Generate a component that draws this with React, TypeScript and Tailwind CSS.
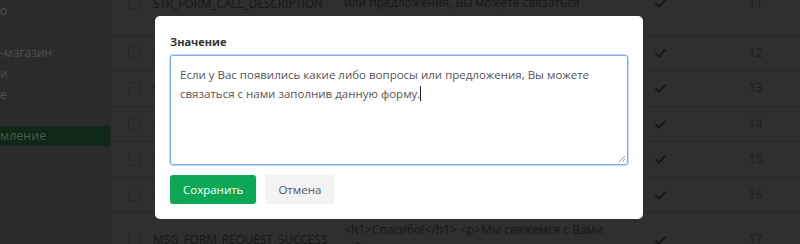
import React from 'react';

const rows = [
  { id: 11, key: 'STR_FORM_CALL_DESCRIPTION', value: ['Если у Вас появились какие либо вопросы', 'или предложения, Вы можете связаться', 'с нами заполнив данную форму.'] },
  { id: 12, key: 'STR_FORM_CALL_TITLE', value: ['Обратная связь'] },
  { id: 13, key: 'STR_FORM_NAME', value: ['Ваше имя'] },
  { id: 14, key: 'STR_FORM_PHONE', value: ['Телефон'] },
  { id: 15, key: 'STR_FORM_EMAIL', value: ['E-mail'] },
  { id: 16, key: 'STR_FORM_SEND', value: ['Отправить'] },
  { id: 17, key: 'MSG_FORM_REQUEST_SUCCESS', value: ['<h1>Спасибо!</h1> <p>Мы свяжемся с Вами', 'в ближайшее время.</p>'] },
];

const Check = () => (
  <svg width="11" height="9" viewBox="0 0 11 9" fill="none">
    <path d="M1 4.8 L4 7.6 L10 1.2" stroke="#161616" strokeWidth="2" strokeLinecap="round" strokeLinejoin="round" />
  </svg>
);

const App = () => {
  return (
    <div
      className="relative w-[800px] h-[244px] overflow-hidden bg-[#2f2f2f]"
      style={{ fontFamily: '"Open Sans", "Noto Sans", sans-serif' }}
    >
      <div className="flex h-full">
        {/* sidebar, dimmed */}
        <div className="w-[111px] shrink-0 bg-[#2b2b2b] border-r border-[#272727] text-[12px] text-[#4e4e4e]">
          <div className="leading-[21px] h-[21px]">о</div>
          <div className="h-[21px]" />
          <div className="leading-[21px] h-[21px]">-магазин</div>
          <div className="leading-[21px] h-[21px]">и</div>
          <div className="leading-[21px] h-[21px]">е</div>
          <div className="h-[21px]" />
          <div className="leading-[20px] h-[20px] bg-[#0f2716] text-[#415c49] text-[12.5px]">мление</div>
        </div>

        {/* table, dimmed */}
        <div className="flex-1 -mt-[33px] text-[11.75px] text-[#171717]">
          {rows.map((r, idx) => (
            <div
              key={r.id}
              className={`flex items-center border-b border-[#282828] leading-[18.5px] ${idx === 0 ? 'pt-[8px] pb-[4px]' : 'py-[8px]'}`}
            >
              <div className="w-[42px] flex justify-center pl-[5px]">
                <div className="w-[13px] h-[13px] rounded-[3px] border border-[#262626]" />
              </div>
              <div className="w-[191px]">{r.key}</div>
              <div className="w-[303px] text-[12px]">
                {r.value.map((v, i) => (
                  <div key={i}>{v}</div>
                ))}
              </div>
              <div className="w-[30px] pl-[8px] pt-[1px]">
                <Check />
              </div>
              <div className="flex-1 text-center text-[#1e1e1e] text-[12.5px] pl-[34px]">{r.id}</div>
            </div>
          ))}
        </div>
      </div>

      {/* modal */}
      <div className="absolute left-[155px] top-[16px] w-[488px] rounded-[5px] bg-white p-[15px]">
        <div className="mt-[1px] mb-[3px] text-[11px] leading-[20px] font-bold text-[#333333]">Значение</div>
        <div className="relative h-[110px] rounded-[3px] border border-[#7fadea] shadow-[0_0_0_1px_#c3d9f6] px-[9px] py-[9px] text-[11.5px] leading-[19px] text-[#555555]">
          Если у Вас появились какие либо вопросы или предложения, Вы можете связаться с нами заполнив данную форму.
          <span className="inline-block w-px h-[15px] bg-[#222] align-[-3px]" />
          <svg className="absolute right-[1px] bottom-[1px]" width="8" height="8" viewBox="0 0 8 8">
            <path d="M7 1 L1 7 M7 4 L4 7" stroke="#9a9a9a" strokeWidth="1" />
          </svg>
        </div>
        <div className="mt-[10px] flex gap-[9px]">
          <button className="h-[29px] px-[13px] rounded-[3px] bg-[#0aa757] text-white text-[11.5px]">Сохранить</button>
          <button className="h-[29px] px-[13px] rounded-[3px] bg-[#f3f3f3] text-[#555555] text-[11.5px]">Отмена</button>
        </div>
      </div>
    </div>
  );
};

export default App;
